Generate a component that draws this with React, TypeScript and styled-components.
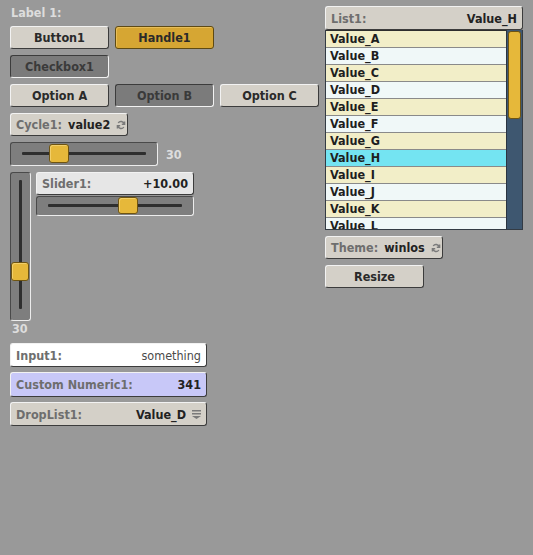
import React from 'react';
import styled, { createGlobalStyle, css } from 'styled-components';

const GlobalStyle = createGlobalStyle`
  body {
    margin: 0;
    background: #999999;
    font-family: 'DejaVu Sans Condensed', 'DejaVu Sans', 'Liberation Sans', sans-serif;
    font-weight: bold;
    font-size: 12.5px;
  }
`;

const listValues = [
  'Value_A', 'Value_B', 'Value_C', 'Value_D', 'Value_E', 'Value_F',
  'Value_G', 'Value_H', 'Value_I', 'Value_J', 'Value_K', 'Value_L',
];

const raised = css`
  border: 1px solid;
  border-color: #f2f2f2 #3c3c3c #3c3c3c #f2f2f2;
  border-radius: 3px;
`;

const sunken = css`
  border: 1px solid;
  border-color: #4a4a4a #ececec #ececec #4a4a4a;
  border-radius: 3px;
`;

const Page = styled.div`
  display: flex;
  gap: 6px;
  padding: 6px 10px;
  min-height: 543px;
`;

const LeftColumn = styled.div`
  width: 309px;
  display: flex;
  flex-direction: column;
  gap: 6px;
`;

const RightColumn = styled.div`
  width: 198px;
  display: flex;
  flex-direction: column;
  gap: 6px;
`;

const Caption = styled.div`
  height: 14px;
  line-height: 14px;
  color: #dddddd;
  padding-left: 1px;
`;

const Row = styled.div`
  display: flex;
  gap: 6px;
`;

const Button = styled.div<{ $variant?: 'normal' | 'active' | 'pressed'; $width?: number }>`
  box-sizing: border-box;
  width: ${(p) => p.$width ?? 99}px;
  height: 23px;
  display: flex;
  align-items: center;
  justify-content: center;
  color: #2a2a2a;
  background: #d4d0c8;
  ${raised};
  ${(p) =>
    p.$variant === 'active' &&
    css`
      background: #d6a633;
      border-color: #5e4a14;
      box-shadow: inset 1px 1px 0 #e8be58;
    `}
  ${(p) =>
    p.$variant === 'pressed' &&
    css`
      background: #7b7b7b;
      color: #3a3a3a;
      border-color: #3c3c3c #f2f2f2 #f2f2f2 #3c3c3c;
    `}
`;

const Field = styled.div<{ $bg?: string; $width?: number; $height?: number }>`
  box-sizing: border-box;
  width: ${(p) => (p.$width ? `${p.$width}px` : '100%')};
  height: ${(p) => p.$height ?? 23}px;
  display: flex;
  align-items: center;
  gap: 6px;
  padding: 0 5px;
  background: ${(p) => p.$bg ?? '#d4d0c8'};
  ${raised};
  svg {
    flex: none;
  }
`;

const FieldLabel = styled.span`
  color: #6e6e6e;
  white-space: nowrap;
`;

const FieldValue = styled.span<{ $right?: boolean; $muted?: boolean }>`
  color: ${(p) => (p.$muted ? '#4a4a4a' : '#222222')};
  font-weight: ${(p) => (p.$muted ? 'normal' : 'bold')};
  margin-left: ${(p) => (p.$right ? 'auto' : '0')};
  white-space: nowrap;
`;

const SliderTrack = styled.div<{ $width: number; $height: number }>`
  box-sizing: border-box;
  position: relative;
  width: ${(p) => p.$width}px;
  height: ${(p) => p.$height}px;
  background: #7e7e7e;
  ${sunken};
`;

const Groove = styled.div<{ $vertical?: boolean }>`
  position: absolute;
  background: #2e2e2e;
  border-radius: 1px;
  ${(p) =>
    p.$vertical
      ? css`
          left: 8px;
          top: 7px;
          bottom: 11px;
          width: 3px;
        `
      : css`
          top: 50%;
          left: 11px;
          right: 11px;
          height: 3px;
          margin-top: -2px;
        `}
`;

const Knob = styled.div`
  position: absolute;
  box-sizing: border-box;
  width: 20px;
  height: 19px;
  background: #e6b83a;
  border: 1px solid #6e5412;
  border-radius: 3px;
  box-shadow: inset 1px 1px 0 #f2cf6a;
`;

const ValueTag = styled.span`
  color: #dddddd;
  align-self: center;
  margin-left: 2px;
`;

const SliderGroup = styled.div`
  display: flex;
  gap: 5px;
`;

const SliderStack = styled.div`
  display: flex;
  flex-direction: column;
  gap: 1px;
`;

const VerticalBlock = styled.div`
  display: flex;
  flex-direction: column;
  gap: 1px;
`;

const TallCaption = styled.div`
  height: 13px;
  line-height: 13px;
  color: #dddddd;
  padding-left: 2px;
`;

const Fields = styled.div`
  display: flex;
  flex-direction: column;
  gap: 5px;
  width: 197px;
  margin-top: 2px;
`;

const ListBox = styled.div`
  display: flex;
  flex-direction: column;
`;

const ListHeader = styled(Field)`
  height: 24px;
`;

const ListBody = styled.div`
  box-sizing: border-box;
  height: 200px;
  display: flex;
  border: 1px solid #333b44;
  border-top: none;
  overflow: hidden;
  background: #3e5770;
`;

const Rows = styled.div`
  flex: 1;
  display: flex;
  flex-direction: column;
  border-right: 1px solid #2a3440;
`;

const ListRow = styled.div<{ $tone: 'even' | 'odd' | 'selected' }>`
  flex: none;
  height: 16px;
  line-height: 16px;
  padding-left: 4px;
  color: #1e1e1e;
  border-top: 1px solid #8a8a8a;
  background: ${(p) =>
    p.$tone === 'selected' ? '#74e4f2' : p.$tone === 'even' ? '#f2eec8' : '#f0f8f8'};
  &:first-child {
    border-top: 1px solid #2e2e2e;
  }
`;

const ScrollBar = styled.div`
  width: 15px;
  position: relative;
`;

const ScrollThumb = styled.div`
  position: absolute;
  box-sizing: border-box;
  top: 1px;
  left: 1px;
  width: 13px;
  height: 88px;
  background: #e6b83a;
  border: 1px solid #6e5412;
  border-radius: 3px;
`;

function CycleIcon() {
  return (
    <svg width="10" height="10" viewBox="0 0 10 10" fill="none" stroke="#7a7a7a" strokeWidth="1.4">
      <path d="M8.2 4A3.3 3.3 0 0 0 2.2 3" />
      <path d="M1.8 6A3.3 3.3 0 0 0 7.8 7" />
      <path d="M8.6 1.4V4.2H5.8" />
      <path d="M1.4 8.6V5.8H4.2" />
    </svg>
  );
}

function DropIcon() {
  return (
    <svg width="9" height="10" viewBox="0 0 9 10" fill="#7a7a7a">
      <rect x="0" y="1" width="9" height="1.5" />
      <rect x="0" y="4" width="9" height="1.5" />
      <path d="M0 7H9L4.5 10Z" />
    </svg>
  );
}

export default function App() {
  return (
    <>
      <GlobalStyle />
      <Page>
        <LeftColumn>
          <Caption>Label 1:</Caption>
          <Row>
            <Button>Button1</Button>
            <Button $variant="active">Handle1</Button>
          </Row>
          <Row>
            <Button $variant="pressed">Checkbox1</Button>
          </Row>
          <Row>
            <Button>Option A</Button>
            <Button $variant="pressed">Option B</Button>
            <Button>Option C</Button>
          </Row>
          <Field $width={118}>
            <FieldLabel>Cycle1:</FieldLabel>
            <FieldValue>value2</FieldValue>
            <CycleIcon />
          </Field>
          <Row>
            <SliderTrack $width={148} $height={24}>
              <Groove />
              <Knob style={{ left: 38, top: 1 }} />
            </SliderTrack>
            <ValueTag>30</ValueTag>
          </Row>
          <VerticalBlock>
            <SliderGroup>
              <SliderTrack $width={21} $height={149}>
                <Groove $vertical />
                <Knob style={{ left: 0, top: 89, width: 18 }} />
              </SliderTrack>
              <SliderStack>
                <Field $width={158} $bg="#e6e6e6">
                  <FieldLabel>Slider1:</FieldLabel>
                  <FieldValue $right>+10.00</FieldValue>
                </Field>
                <SliderTrack $width={158} $height={20}>
                  <Groove />
                  <Knob style={{ left: 81, top: 0, height: 17 }} />
                </SliderTrack>
              </SliderStack>
            </SliderGroup>
            <TallCaption>30</TallCaption>
          </VerticalBlock>
          <Fields>
            <Field $bg="#ffffff" $height={24}>
              <FieldLabel>Input1:</FieldLabel>
              <FieldValue $right $muted>something</FieldValue>
            </Field>
            <Field $bg="#c8c8f8" $height={25}>
              <FieldLabel>Custom Numeric1:</FieldLabel>
              <FieldValue $right>341</FieldValue>
            </Field>
            <Field $height={24}>
              <FieldLabel>DropList1:</FieldLabel>
              <FieldValue $right>Value_D</FieldValue>
              <DropIcon />
            </Field>
          </Fields>
        </LeftColumn>
        <RightColumn>
          <ListBox>
            <ListHeader>
              <FieldLabel>List1:</FieldLabel>
              <FieldValue $right>Value_H</FieldValue>
            </ListHeader>
            <ListBody>
              <Rows>
                {listValues.map((v, i) => (
                  <ListRow key={v} $tone={v === 'Value_H' ? 'selected' : i % 2 === 0 ? 'even' : 'odd'}>
                    {v}
                  </ListRow>
                ))}
              </Rows>
              <ScrollBar>
                <ScrollThumb />
              </ScrollBar>
            </ListBody>
          </ListBox>
          <Field $width={118}>
            <FieldLabel>Theme:</FieldLabel>
            <FieldValue>winlos</FieldValue>
            <CycleIcon />
          </Field>
          <Button>Resize</Button>
        </RightColumn>
      </Page>
    </>
  );
}
